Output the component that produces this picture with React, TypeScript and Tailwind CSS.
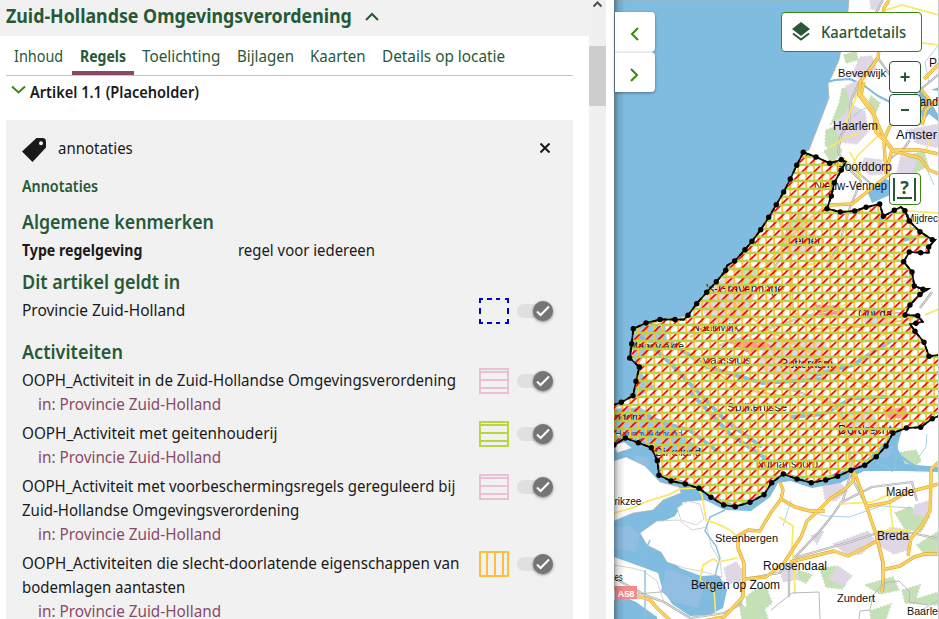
import { useLayoutEffect, useRef, useState } from "react";

/* Sets a line of text condensed to a given width. */
function Fit({ w, children, className = "" }: { w: number; children: string; className?: string }) {
  const ref = useRef<HTMLSpanElement>(null);
  const [scale, setScale] = useState(1);
  useLayoutEffect(() => {
    if (ref.current) setScale(w / ref.current.offsetWidth);
  }, [w, children]);
  return (
    <span className={`block whitespace-nowrap ${className}`} style={{ width: w }}>
      <span ref={ref} className="inline-block origin-left" style={{ transform: `scaleX(${scale})` }}>
        {children}
      </span>
    </span>
  );
}

type Kind = "dash" | "pink" | "green" | "orange";

function Swatch({ kind }: { kind: Kind }) {
  const color = { dash: "#0000c8", pink: "#ebbfd6", green: "#b9d63f", orange: "#ffbf3c" }[kind];
  return (
    <svg width="30" height="26" viewBox="0 0 30 26" fill="none" stroke={color} strokeWidth="2" shapeRendering="crispEdges">
      {kind === "dash" ? (
        <path d="M0 1h4M8 1h5M17 1h4M26 1h4M0 25h4M8 25h5M17 25h4M26 25h4M1 0v5M1 10v6M1 21v5M29 0v5M29 10v6M29 21v5" />
      ) : (
        <rect x="1" y="1" width="28" height="24" />
      )}
      {(kind === "pink" || kind === "green") && <path d="M1 4h28M1 12h28M1 20h28" />}
      {kind === "orange" && <path d="M8 1v24M16 1v24M24 1v24" />}
    </svg>
  );
}

function Toggle() {
  return (
    <div className="flex h-[26px] w-9 items-center rounded-full">
      <div className="h-[14px] w-5 rounded-l-full bg-[#e0e0e0]" />
      <div className="-ml-1 flex size-5 shrink-0 items-center justify-center rounded-full bg-[#757575] shadow-[0_1px_3px_rgba(0,0,0,0.45)]">
        <svg width="14" height="12" viewBox="0 0 14 12" fill="none" stroke="white" strokeWidth="2">
          <path d="M1 6.5 4.6 10 13 1.5" />
        </svg>
      </div>
    </div>
  );
}

function Row({ lines, kind }: { lines: [string, number][]; kind: Kind }) {
  return (
    <div className="flex h-full items-start">
      <div className="w-[457px]">
        {lines.map(([t, w]) => (
          <Fit key={t} w={w}>{t}</Fit>
        ))}
      </div>
      <Swatch kind={kind} />
      <div className="ml-2">
        <Toggle />
      </div>
    </div>
  );
}

const activities: { lines: [string, number][]; kind: Kind }[] = [
  { lines: [["OOPH_Activiteit in de Zuid-Hollandse Omgevingsverordening", 434]], kind: "pink" },
  { lines: [["OOPH_Activiteit met geitenhouderij", 255]], kind: "green" },
  { lines: [["OOPH_Activiteit met voorbeschermingsregels gereguleerd bij", 433], ["Zuid-Hollandse Omgevingsverordening", 277]], kind: "pink" },
  { lines: [["OOPH_Activiteiten die slecht-doorlatende eigenschappen van", 437], ["bodemlagen aantasten", 163]], kind: "orange" },
];

const tabs: [string, number][] = [
  ["Inhoud", 49], ["Regels", 46], ["Toelichting", 78], ["Bijlagen", 57], ["Kaarten", 55], ["Details op locatie", 123],
];

/* Province outline: [x, y, vertex has a dot] */
const outline: [number, number, number][] = [
  [803.3,152.3,1],[796.7,165.3,1],[790.3,179,1],[783.7,192,1],[776.3,204.7,1],[768.7,217.3,1],[760.7,229.7,1],[752,241.3,1],[745,249.7,1],[734.7,261,1],[727,265.5,0],[725.7,270.3,1],[716.3,281.7,1],[706.7,292.3,1],[696.7,303.7,1],[688,315.3,1],[684,319.5,0],[675,319.5,1],[660,319.5,1],[646,323,1],[633.3,328.7,1],[631.7,343.7,1],[629.7,358,1],[639.3,367,1],[636,381.3,1],[633,395.7,1],[621.3,402.3,1],[608,407,0],[608,449,0],[614,445,1],[625.3,438,1],[638.3,442.7,1],[651.3,447.7,1],[657.3,460.7,1],[659,475.3,1],[671,481,1],[685.3,484,1],[699,488.3,1],[711,497.3,1],[723.7,505,1],[735.3,506.7,1],[750,502.3,1],[764,494.7,1],[771.7,482.7,1],[783.3,474,1],[797,479,1],[811.3,482.7,1],[825.7,480,1],[837.7,476.3,1],[851,470.3,1],[864.7,465.3,1],[876.3,456.7,1],[886,446,1],[893,433,1],[906.3,428,1],[920.7,427.3,1],[932.3,418.7,1],[946,413,0],[946,354,0],[929,356.3,1],[924,342.3,1],[915,331.3,1],[910,324,0],[916,323.3,1],[922.7,321.7,0],[917.7,315.7,1],[905,315,1],[910,305,1],[920,294.5,1],[928,289,0],[923,289.3,1],[914.3,286,1],[912,272,1],[903.7,261.7,1],[909.3,252,1],[920.7,252.7,1],[928.7,252.5,0],[928.7,247,1],[935,240,0],[932.3,239.7,1],[920,231.7,1],[909.3,221,1],[905,210.7,1],[901,207,0],[894.3,210.3,1],[883.3,216.3,1],[879.7,204,1],[866,207.3,1],[854.7,211,1],[840.3,212,1],[827,208.7,1],[831.3,196,1],[834.3,182.7,1],[841.3,170,1],[846,161.7,0],[841.3,159.7,1],[829.7,163.3,1],[816,157,1],
];
const outlinePoints = outline.map(([x, y]) => `${x},${y}`).join(" ");

const motorways = [
  "M889 0 884 8 880 40 878 58 868 72 860 82 859 95 874 115 876 132 886 142 892 150 888 165 888 175 872 188 852 204 828 205",
  "M864 82 861 95 872 108 877 122 884 138 893 150 900 150 920 150 939 154",
  "M884 140 889 128 895 118 M939 98 926 110 922 125 M920 88 928 98 921 110 M939 64 924 79",
  "M884 142 886 174 M893 151 920 158 929 170 939 174",
  "M780 482 783 490 781 499 772 511 765 522 760 531 748 530 738 536 738 548 744 563 744 579 743 597 724 617 698 622",
  "M854 471 853 481 844 490 831 498 818 511 807 521 801 537 791 552 784 563 766 577 744 579",
  "M855 473 866 505 877 537 883 562 883 580 882 592",
  "M939 462 931 469 931 481 930 511 921 527 911 538 908 556",
  "M790 562 834 551 848 556 868 546 877 541 M939 554 925 554 914 557 900 566 882 570 M865 507 890 502 905 493 939 484",
  "M781 499 795 507 810 511 825 511 M614 588 650 600 658 609 672 622",
];
const innerMotorways = [
  "M690 337 720 324 736 306 750 287 772 258 800 227 824 207 M736 306 768 330 810 352 839 372 878 391 M706 365 740 389 777 395 817 397 838 410 848 440 850 470 M778 218 791 257 793 311 812 329 861 327 913 319",
];
const localRoads = [
  "M614 513 632 508 648 501 668 495 680 489 697 488 702 495 706 520 720 525 730 530 738 537",
  "M737 558 718 562 713 559 703 565 700 580 714 590 716 618 M779 517 793 526 792 548 794 565 795 594",
  "M840 504 872 502 889 495 893 530 M877 531 892 531 910 530",
  "M850 170 858 155 878 136 M850 152 862 176 M829 148 846 137 860 133 M843 130 851 110 858 92",
  "M886 10 902 5 939 15 M880 42 898 40 939 45 M640 342 688 350 711 375 748 391",
  "M880 300 891 323 M860 342 900 330 M830 310 870 296 893 282 M925 315 939 309 M868 245 906 264 M760 275 832 260 849 239 M835 421 903 403 939 380",
  "M898 205 908 211 939 213 M926 150 930 140 M844 158 861 179",
];
const rails = [
  "M883 0 873 18 M877 58 860 81 851 100 849 124 841 135 838 152 848 168 861 181 850 207 839 245 824 271",
  "M939 74 915 94 912 104 M878 58 890 75 M848 163 872 185 M885 163 905 147 910 140",
  "M851 472 843 500 832 516 819 532 795 557 789 568 789 597 M852 478 866 505 875 532 882 562 884 590",
  "M614 578 645 595 664 602 690 618 724 613 741 604 744 579 779 573 797 557 850 542 877 533 912 533 939 539",
  "M840 503 872 487 912 482 917 501 M920 308 932 292 M718 346 770 328 810 315 845 309 910 314 M758 292 781 258 792 212 M792 390 839 405 853 468",
];
const greenery = [
  "M844 55 856 51 858 60 846 63Z", "M842 89 853 86 852 105 846 123 838 119 831 124 839 104Z",
  "M826 130 842 124 849 136 831 150 825 145Z", "M871 96 880 103 876 112 869 101Z",
  "M824 151 838 144 842 151 832 164Z", "M907 156 924 151 928 166 911 175Z",
  "M746 597 755 590 766 586 772 603 758 614 747 609Z", "M739 603 750 610 764 607 768 619 742 619Z",
  "M820 569 836 566 846 584 842 589 826 587Z", "M895 513 910 507 930 516 921 532 905 529Z",
  "M917 545 939 531 939 551 926 556Z", "M902 590 920 585 916 599 939 592 939 605 905 603Z",
  "M798 570 812 575 806 583 797 579Z", "M870 611 891 604 886 619 871 619Z",
  "M897 453 916 450 921 461 912 468 898 467Z", "M782 229 800 214 812 223 802 236Z", "M733 270 750 264 762 277 746 286Z",
  "M711 300 727 284 739 292 733 315Z", "M865 585 893 577 899 590 880 594Z",
];
const towns = [
  "M860 57 872 56 876 69 862 79 852 75Z", "M846 86 860 80 861 94 849 101Z", "M835 124 852 105 865 112 868 132 857 144 841 142Z",
  "M864 158 882 160 883 174 870 175 861 167Z", "M907 130 939 124 939 148 916 143Z", "M901 156 916 160 911 178 897 172Z",
  "M724 568 736 562 743 571 741 582 728 584Z", "M878 537 891 527 909 531 910 549 894 554 880 546Z",
  "M833 544 868 531 875 541 861 554 848 555Z", "M829 579 838 566 852 576 843 586Z", "M823 487 840 482 847 491 835 501 825 500Z",
  "M811 536 824 531 817 544Z", "M915 505 928 501 928 518 913 513Z", "M780 570 795 567 799 579 783 582Z",
  "M697 303 726 276 756 292 743 320 713 323Z", "M781 235 807 228 816 251 788 257Z", "M765 338 823 339 838 372 796 384 759 368Z",
  "M859 310 887 308 894 324 867 326Z", "M840 414 873 409 879 434 846 438Z", "M904 281 914 276 913 287Z", "M870 0 882 0 879 11 871 9Z",
  "M628 584 635 585 635 593 629 591Z",
];
const patches = [
  "M729 342 759 338 771 346 749 353Z", "M883 410 906 407 907 418 889 418Z", "M815 305 839 306 842 314 820 316Z",
];

function Roads({ list, c, w }: { list: string[]; c: string; w: number }) {
  return (
    <g stroke={c} strokeWidth={w} fill="none" strokeLinejoin="round">
      {list.map((d) => <path key={d} d={d} />)}
    </g>
  );
}

function Areas({ list, c }: { list: string[]; c: string }) {
  return (
    <g fill={c} stroke={c} strokeWidth="1.5" strokeDasharray="2 1.5">
      {list.map((d) => <path key={d} d={d} />)}
    </g>
  );
}

const innerLabels: [string, number, number, number][] = [
  ["Leiden", 788, 245, 36], ["'s-Gravenhage", 706, 293, 78], ["Naaldwijk", 692, 331, 47], ["Maasvlakte", 629, 350, 55],
  ["Maassluis", 701, 364, 50], ["Rotterdam", 780, 368, 53], ["Gouda", 858, 318, 34], ["Spijkenisse", 727, 411, 60],
  ["Dordrecht", 838, 434, 54], ["Numansdorp", 756, 468, 62], ["Dirksland", 655, 456, 46], ["ndorp", 614.5, 421, 27],
];
const coveredLabels: [string, number, number, number][] = [
  ["Hoofddorp", 836, 171, 56], ["Nieuw-Vennep", 814, 190, 73],
];
const outerLabels: [string, number, number, number][] = [
  ["Beverwijk", 838, 77, 48], ["Haarlem", 833, 130, 45], ["Amster", 896, 139, 41], ["Mijdrec", 906, 222, 32],
  ["P", 929, 67, 8], ["and", 920, 106, 18], ["rikzee", 614.5, 505, 27], ["es", 614.5, 581, 8],
  ["Steenbergen", 715, 542, 63], ["Roosendaal", 763, 570, 64], ["Bergen op Zoom", 691, 589, 89], ["Made", 886, 496, 28],
  ["Breda", 877, 540, 32], ["Zundert", 837, 602, 38], ["Baarle", 907, 615, 31],
];

function Labels({ list }: { list: [string, number, number, number][] }) {
  return (
    <g fontFamily="'Liberation Sans', Arial, sans-serif" fill="#111">
      {list.map(([t, x, y, w]) => (
        <text key={t} x={x} y={y} fontSize={w / t.length > 5.8 ? 12 : 11} textLength={w} lengthAdjust="spacingAndGlyphs">{t}</text>
      ))}
    </g>
  );
}

function MapCanvas() {
  return (
    <svg className="block" width="325" height="619" viewBox="614 0 325 619">
      <defs>
        <pattern id="columns" width="8" height="8" patternUnits="userSpaceOnUse">
          <rect x="5.3" width="1.8" height="8" fill="#ffc042" />
        </pattern>
        <pattern id="slashes" width="12" height="12" patternUnits="userSpaceOnUse">
          <path d="M-3 5 5-3M-3 17 17-3M7 19 19 7" stroke="#fa0000" strokeWidth="1.6" />
        </pattern>
        <pattern id="rows" width="8" height="8" patternUnits="userSpaceOnUse">
          <rect y="3.6" width="8" height="2.6" fill="#b9d43c" />
        </pattern>
        <linearGradient id="edge" x1="0" x2="1">
          <stop offset="0" stopColor="#000" stopOpacity=".35" />
          <stop offset=".4" stopColor="#000" stopOpacity=".12" />
          <stop offset="1" stopColor="#000" stopOpacity="0" />
        </linearGradient>
      </defs>
      <rect x="614" width="325" height="619" fill="#fff" />
      <path d="M614 0H849L847 22 842 45 839 60 832 76 828 83 829 98 821 119 809 150 803 153 783 193 752 242 726 271 688 316 660 321 634 330 631 360 640 368 634 396 614 405Z" fill="#80bbe0" stroke="#b5b5a8" strokeWidth=".7" />
      <path d="M827 82 835 80 850 79 862 84 878 96 890 102" stroke="#78b9e1" strokeWidth="2" fill="none" />
      <Areas list={greenery} c="#c5dfb6" />
      <Areas list={towns} c="#dfd7e5" />
      <Areas list={patches} c="#ff9999" />
      <path d="M868 193 882 178 902 184 890 195 872 203ZM931 90 939 87 939 91ZM918 82 922 88 939 116 939 122 929 114 922 122ZM900 240 910 233 915 239 903 242ZM876 216 884 219 879 227Z" fill="#80bbe0" />

      {/* Delta waters with their islands */}
      <path d="M614 438 626 436 657 446 661 474 688 482 712 496 736 505 765 493 773 481 784 472 812 481 845 470 863 463 881 446 894 431 902 430 897 447 905 464 939 467 939 472 902 471 864 471 840 483 812 488 790 481 778 483 770 497 751 511 725 510 705 500 683 502 675 516 664 521 655 530 664 541 660 551 680 568 701 576 719 575 727 590 723 608 710 615 690 616 672 604 662 588 658 573 642 567 614 557Z" fill="#80bbe0" />
      <path d="M614 474 640 467 655 480 673 490 658 496 646 505 614 511Z M614 527 630 526 640 535 635 552 614 548Z M666 569 690 577 704 589 698 608 673 602 661 591Z M635 455 648 458 650 467 635 463Z M880 449 894 445 890 457 877 459Z" fill="#91bee2" />
      <path d="M614 461 626 457 645 466 660 482 679 487 681 493 663 500 653 510 633 513 614 521Z M640 533 657 521 679 520 692 530 707 527 711 546 720 561 722 577 704 572 684 568 667 562 661 552 647 545Z M677 508 688 501 700 504 704 519 696 525 681 520Z M614 565 632 568 643 571 657 581 664 602 650 598 628 599 614 586Z M614 445 624 442 632 448 617 453Z" fill="#fff" stroke="#b6b6b0" strokeWidth=".6" />
      <path d="M614 600 622 596 636 602 657 617 657 619 614 619Z" fill="#80bbe0" />
      <g fill="none" stroke="#87bfe0" strokeWidth="1.4">
        <path d="M725 510 710 517 705 531 716 546 720 558 717 568 711 596M645 570 645 619M637 535 633 550M650 540 641 560" />
        <path d="M886 447 903 458 920 470M897 440 895 470M876 462 893 471" strokeWidth="2.5" />
        <path d="M797 508 826 516 849 517 881 506 911 508M939 600 920 611M927 434 926 447 918 458M791 500 783 526M938 46 925 62 929 83M926 167 934 185M853 117 861 110 872 106" strokeWidth=".7" />
        <path d="M640 336 669 362 697 391 726 421 762 447M668 341 707 367 762 383 826 379M690 392 731 435 771 462M790 417 824 414 853 398 887 397M631 410 667 424 689 430 720 453M815 375 853 365 892 340" strokeWidth="4" />
      </g>
      <path d="M632 329 665 322 668 350 648 351 636 368 655 387 635 399ZM614 409 640 407 671 428 705 451 659 454 630 437 614 432Z" fill="#80bbe0" opacity=".8" />

      <Roads list={rails} c="#aaa" w={2.2} />
      <Roads list={rails} c="#eee" w={0.8} />
      <Roads list={localRoads} c="#f1dc61" w={1.5} />
      <Roads list={localRoads} c="#fff05f" w={0.9} />
      <Roads list={innerMotorways} c="#f0cb70" w={2.2} />
      <Roads list={motorways} c="#e2ab30" w={3.4} />
      <Roads list={motorways} c="#ffdf76" w={2} />
      <Roads list={motorways} c="#eeb53b" w={0.5} />
      <path d="M614 605 638 594 672 591M771 610 792 593 819 592 820 619M859 619 860 611 870 610 873 595 884 583 899 581 910 592 909 602 928 605" fill="none" stroke="#b9b9b9" />

      <Labels list={innerLabels} />
      <text x="614.5" y="438" fontSize="10" fill="#1559a8" textLength="68" fontFamily="'Liberation Sans', sans-serif">Haringvlietmond</text>
      <Labels list={coveredLabels} />
      <polygon points={outlinePoints} fill="url(#columns)" />
      <polygon points={outlinePoints} fill="url(#slashes)" />
      <polygon points={outlinePoints} fill="url(#rows)" />
      <polygon points={outlinePoints} fill="none" stroke="#a5b733" strokeWidth="2" />
      <polygon points={outlinePoints} fill="none" stroke="#07073c" strokeWidth="1.5" />
      <polygon points={outlinePoints} fill="none" stroke="#000" strokeWidth="1.8" strokeDasharray="5 4" />
      {outline.filter((p) => p[2]).map(([x, y]) => <circle key={`${x}-${y}`} cx={x} cy={y} r="2.7" />)}
      <Labels list={outerLabels} />
      <rect x="615" y="586" width="22" height="13" fill="#f28b8b" />
      <text x="617.5" y="596.5" fontSize="9.5" fontWeight="bold" fill="#fff" fontFamily="'Liberation Sans', sans-serif" textLength="17">A58</text>
      <rect x="614" width="11" height="619" fill="url(#edge)" />
      <path d="M938.5 0V619" stroke="#ccc" />
    </svg>
  );
}

function Chevron({ className, d, w, h }: { className: string; d: string; w: number; h: number }) {
  return (
    <svg className={className} width={w} height={h} viewBox={`0 0 ${w} ${h}`} fill="none" stroke="currentColor" strokeWidth="2">
      <path d={d} />
    </svg>
  );
}

export default function App() {
  return (
    <div className="flex h-[619px] w-[939px] overflow-hidden bg-white font-['Noto_Sans',sans-serif] text-base leading-6 text-[#1a1a1a]">
      <main className="w-[589px] shrink-0">
        <header className="flex h-9 items-center bg-[#f1f1f1] pb-1 pl-1.5 text-xl font-bold text-[#275937]">
          <Fit w={346}>Zuid-Hollandse Omgevingsverordening</Fit>
          <Chevron className="ml-[13px]" w={14} h={9} d="M1 8 7 2l6 6" />
        </header>
        <nav className="ml-1.5 flex h-10 w-[567px] border-b border-[#c6c6c6] text-[#275937]">
          {tabs.map(([t, w], i) => (
            <div
              key={t}
              className={
                i === 1
                  ? "h-[39px] border-b-4 border-[#8a4867] px-2 pt-2 font-bold"
                  : "h-[39px] px-2 pt-2"
              }
            >
              <Fit w={w + 0.5}>{t}</Fit>
            </div>
          ))}
        </nav>
        <div className="flex h-11 items-start pl-[11px] pt-1">
          <Chevron className="mt-[5px] text-[#39870c]" w={15} h={9} d="M1 1.5 7.5 7.5 14 1.5" />
          <Fit w={168.5} className="ml-1 font-semibold">Artikel 1.1 (Placeholder)</Fit>
        </div>
        <section className="ml-1.5 h-[499px] w-[567px] bg-[#f1f1f1] px-4 pt-4">
          <div className="flex h-6 items-center">
            <svg className="mt-1" width="24" height="24" viewBox="0 0 24 24" fill="#1a1a1a">
              <path fillRule="evenodd" d="M14.5 0H20.5Q24 0 24 4V9.5L10.5 24 0 13.4ZM19 3.2a2 2 0 1 0 0 4 2 2 0 0 0 0-4Z" />
            </svg>
            <Fit w={75} className="ml-3">annotaties</Fit>
            <svg className="ml-[407px]" width="10" height="10" viewBox="0 0 10 10" stroke="#1a1a1a" strokeWidth="2">
              <path d="M.5.5 9.5 9.5M9.5.5.5 9.5" />
            </svg>
          </div>
          <Fit w={76} className="mt-3.5 font-semibold text-[#275937]">Annotaties</Fit>
          <Fit w={192} className="mt-3 text-xl leading-6 font-semibold text-[#275937]">Algemene kenmerken</Fit>
          <div className="mt-1 flex">
            <Fit w={120} className="mr-24 font-bold">Type regelgeving</Fit>
            <Fit w={137}>regel voor iedereen</Fit>
          </div>
          <Fit w={158} className="mt-2 text-xl leading-6 font-semibold text-[#275937]">Dit artikel geldt in</Fit>
          <div className="mt-1 h-[42px]">
            <Row lines={[["Provincie Zuid-Holland", 163]]} kind="dash" />
          </div>
          <Fit w={101} className="text-xl leading-6 font-semibold text-[#275937]">Activiteiten</Fit>
          <div className="mt-1 flex flex-col gap-[5px]">
            {activities.map((a) => (
              <div key={a.lines[0][0]}>
                <div className={a.lines.length === 1 ? "h-6" : "h-12"}>
                  <Row {...a} />
                </div>
                <Fit w={183.5} className="ml-4 text-[#8a4867]">in: Provincie Zuid-Holland</Fit>
              </div>
            ))}
          </div>
        </section>
      </main>
      <div className="flex w-[17px] shrink-0 flex-col items-center bg-[#f0f0f0]">
        <Chevron className="mt-px text-[#505050]" w={9} h={7} d="M.5 5.5 4.5 1.5l4 4" />
        <div className="mt-[38px] h-[60px] w-full bg-[#cdcdcd]" />
      </div>
      <aside className="relative ml-2 w-[325px] shrink-0">
        <MapCanvas />
        <div className="absolute left-px top-3 flex flex-col text-[#39870c]">
          <button className="flex h-10 w-10 items-center justify-center rounded-r bg-white pr-px pt-1 shadow-[0_1px_3px_rgba(0,0,0,0.4)]">
            <Chevron className="" w={9} h={14} d="M8 1 2 7l6 6" />
          </button>
          <button className="flex h-10 w-10 items-center justify-center rounded-r border-t border-gray-200 bg-white pr-px pt-1 shadow-[0_1px_3px_rgba(0,0,0,0.4)]">
            <Chevron className="" w={9} h={14} d="M1 1l6 6-6 6" />
          </button>
        </div>
        <button className="absolute left-[167px] top-3 flex h-10 w-[141px] items-center rounded border border-[#39870c] bg-white pl-2.5 text-[#275937]">
          <svg width="18" height="20" viewBox="0 0 18 20" fill="#275937">
            <path d="M9 0 18 7 9 14 0 7Z" />
            <path d="M1 11.5 9 17.5l8-6" fill="none" stroke="#275937" strokeWidth="2" />
          </svg>
          <Fit w={85} className="ml-[11px] font-medium">Kaartdetails</Fit>
        </button>
        <div className="absolute left-[275px] top-[61px] flex flex-col gap-px text-[#275937]">
          <button className="flex size-8 items-center justify-center rounded border border-[#275937] bg-white">
            <svg width="10" height="10" viewBox="0 0 10 10" stroke="#275937" strokeWidth="2"><path d="M5 .5v9M.5 5h9" /></svg>
          </button>
          <button className="flex size-8 items-center justify-center rounded border border-[#275937] bg-white">
            <svg width="8" height="2"><rect width="8" height="2" fill="#275937" /></svg>
          </button>
        </div>
        <button className="absolute left-[275px] top-[173px] flex size-8 items-center justify-between rounded border border-[#39870c] bg-white pl-[3px] pr-1 text-[#275937]">
          <span className="h-[23px] w-0.5 bg-[#275937]" />
          <span className="flex flex-col items-center">
            <span className="h-[18px] text-lg leading-4 font-bold">?</span>
            <span className="h-0.5 w-[15px] bg-[#275937]" />
          </span>
          <span className="h-[23px] w-0.5 bg-[#275937]" />
        </button>
      </aside>
    </div>
  );
}
